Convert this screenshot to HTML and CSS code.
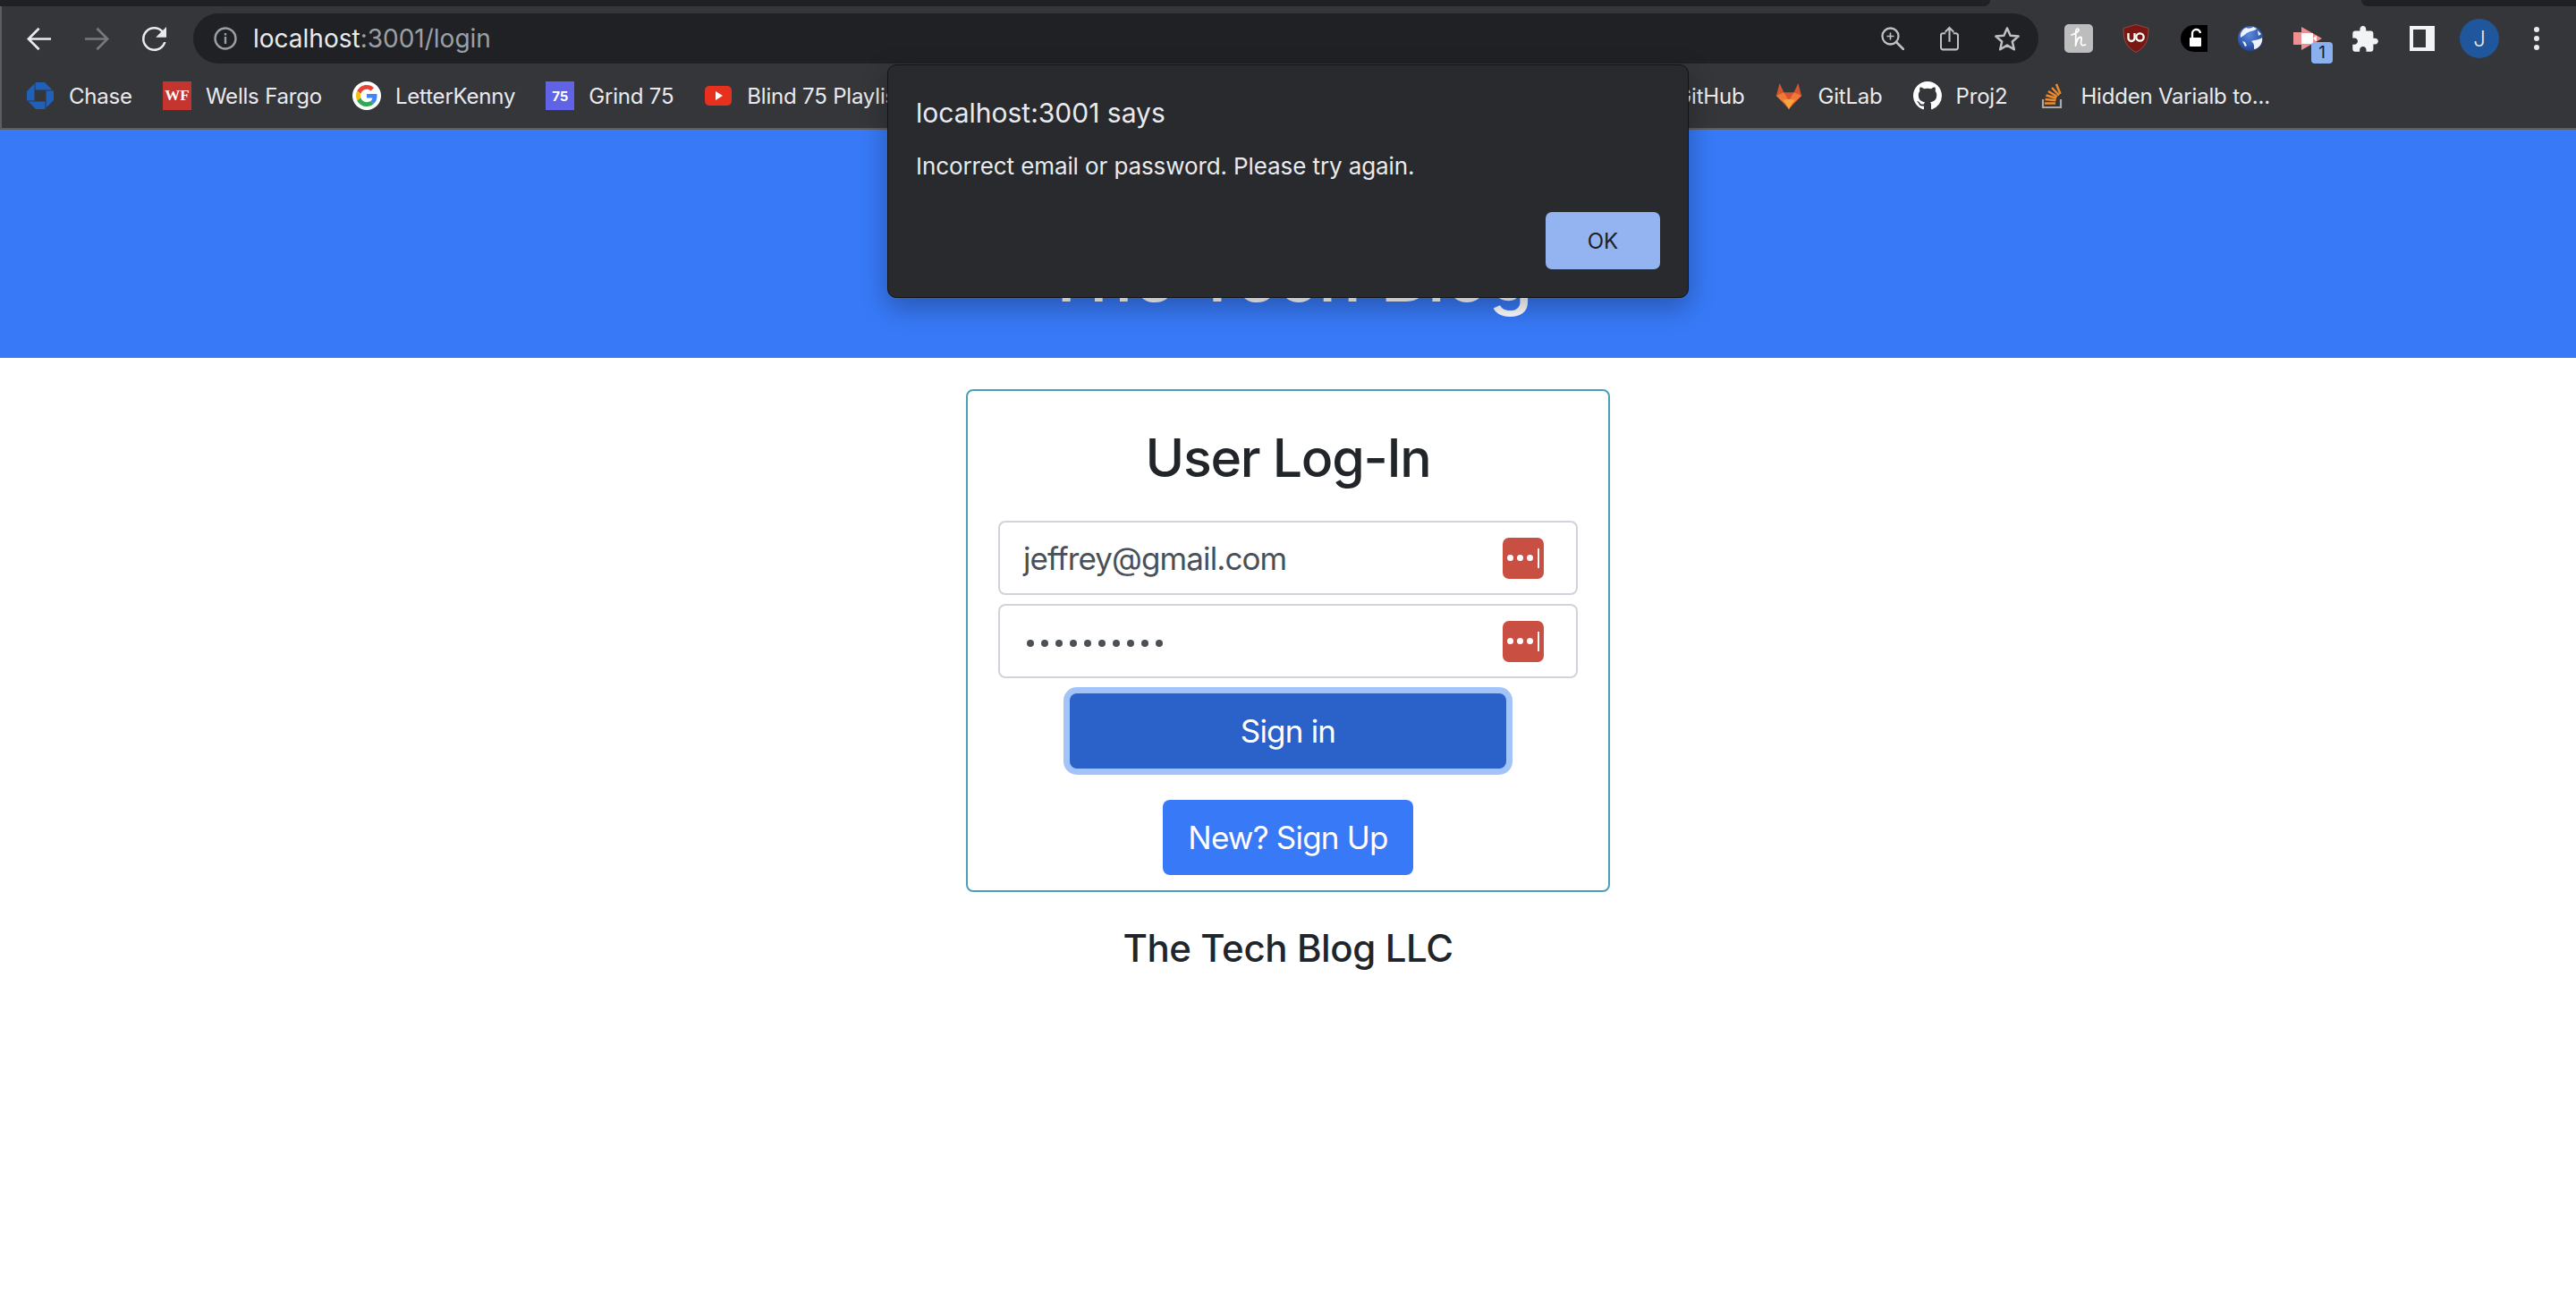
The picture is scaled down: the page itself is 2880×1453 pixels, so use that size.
FILE: index.html
```html
<!DOCTYPE html>
<html lang="en">
<head>
<meta charset="utf-8">
<title>The Tech Blog</title>
<link rel="stylesheet" href="styles.css">
</head>
<body>
<div class="chrome">
  <div class="tabstrip"><div class="tab-dark tab-left"></div><div class="tab-dark tab-right"></div></div>
  <div class="toolbar">
    <svg class="nav nav-back" viewBox="4 4 16 16"><path fill="#e8eaed" d="M20 11.200H7l5.600-5.600L11.500 4.500 4 12l7.500 7.500 1.100-1.100L7 12.800h13z"/></svg>
    <svg class="nav nav-fwd" viewBox="4 4 16 16"><path fill="#77787b" d="M4 11.200h13l-5.600-5.600 1.100-1.100L20 12l-7.500 7.500-1.100-1.100 5.600-5.600H4z"/></svg>
    <svg class="nav nav-reload" viewBox="4 4 16 16"><path fill="#e8eaed" d="M17.650 6.350A7.958 7.958 0 0012 4c-4.420 0-7.990 3.580-7.990 8s3.570 8 7.990 8c3.730 0 6.840-2.550 7.730-6h-1.500A6.500 6.500 0 0112 18.500 6.500 6.500 0 015.500 12 6.500 6.500 0 0112 5.500c1.800 0 3.300.7 4.500 1.900L13 11h7V4z"/></svg>
    <div class="omnibox">
      <svg class="omni-info" viewBox="0 0 26 26"><circle cx="13" cy="13" r="11.500" fill="none" stroke="#9aa0a6" stroke-width="2.400"/><rect x="11.800" y="11" width="2.400" height="8" fill="#9aa0a6"/><rect x="11.800" y="7" width="2.400" height="2.500" fill="#9aa0a6"/></svg>
      <span class="url"><span class="url-host">localhost</span><span class="url-rest">:3001/login</span></span>
      <svg class="omni-zoom" viewBox="0 0 26 26"><circle cx="10.500" cy="10.500" r="9" fill="none" stroke="#bdc1c4" stroke-width="2.300"/><path d="M17 17l8 8" stroke="#bdc1c4" stroke-width="2.600" stroke-linecap="round"/><path d="M6.500 10.500h8M10.500 6.500v8" stroke="#bdc1c4" stroke-width="1.600"/></svg>
      <svg class="omni-share" viewBox="0 0 22 28"><path d="M6.500 8H3.500a2.500 2.500 0 00-2.500 2.500v14A2.500 2.500 0 003.500 27h15a2.500 2.500 0 002.500-2.500v-14A2.500 2.500 0 0018.500 8h-3" fill="none" stroke="#bdc1c4" stroke-width="2.200"/><path d="M11 18V2M6 6.500L11 1.500l5 5" fill="none" stroke="#bdc1c4" stroke-width="2.200"/></svg>
      <svg class="omni-star" viewBox="0 0 30 28"><path d="M15 2.500l3.600 8.300 9 .8-6.800 5.900 2 8.800-7.800-4.700-7.800 4.700 2-8.800-6.800-5.900 9-.8z" fill="none" stroke="#bdc1c4" stroke-width="2.500" stroke-linejoin="round"/></svg>
    </div>
    <div class="extensions">
      <svg class="ext ext-h" viewBox="0 0 32 32"><rect width="32" height="32" rx="5" fill="#bdbdbd"/><path d="M8 12C11 11 16 9 16 6.500 16 4.500 13.500 4.500 13 7 12.500 10 13 18 12.500 24 13.500 18 16 14.500 18 14.500 20 14.500 19 18 18.500 20 18 23 20 24.500 23.500 23" fill="none" stroke="#fff" stroke-width="1.800" stroke-linecap="round" stroke-linejoin="round"/></svg>
      <svg class="ext ext-ub" viewBox="0 0 30 32"><path d="M15 .5L29 4.500C29 17 27 25 15 31.500 3 25 1 17 1 4.500z" fill="#7a1712" stroke="#8d4a46"/><path d="M6.500 10v5.500a3.500 3.500 0 007 0V10" fill="none" stroke="#fff" stroke-width="2.300"/><circle cx="19.500" cy="14.500" r="4.200" fill="none" stroke="#fff" stroke-width="2.300"/></svg>
      <svg class="ext ext-lock" viewBox="0 0 30 30"><path d="M15 0H30V30H15A15 15 0 0115 0z" fill="#000"/><rect x="10" y="14" width="13" height="10" rx="1" fill="#fff"/><path d="M13 14V10a4.500 4.500 0 019-1" fill="none" stroke="#fff" stroke-width="2.400"/></svg>
      <svg class="ext ext-globe" viewBox="0 0 28 28"><defs><radialGradient id="g" cx="45%" cy="35%" r="70%"><stop offset="0" stop-color="#5a8ae0"/><stop offset="1" stop-color="#1f3f8f"/></radialGradient></defs><circle cx="14" cy="14" r="14" fill="url(#g)"/><path d="M9 2C11 3 15 3 17 1L21 3C19 6 15 5 12 7 9 8 7 11 3 13 2 8 5 4 9 2zM15 17C19 15 24 16 27 13 28 19 24 25 18 26 18 23 19 20 15 17zM22 5L26 9 23 11zM5 17l3 1 2 4-2 1z" fill="#eef3fb"/></svg>
      <span class="ext-video">
        <svg class="ext ext-vid" viewBox="0 0 32 26"><path d="M9 0L32 13 9 26z" fill="#ef8f8f"/><rect y="6" width="9" height="14" fill="#ef8f8f"/><rect x="9" y="7" width="13" height="12" fill="#fff"/><path d="M22 13L26 9.500v7z" fill="#fff"/></svg>
        <span class="badge">1</span>
      </span>
      <svg class="ext ext-puzzle" viewBox="1.800 1 21.300 21.200"><path fill="#f1f3f4" d="M20.500 11H19V7c0-1.100-.9-2-2-2h-4V3.500C13 2.120 11.880 1 10.500 1S8 2.120 8 3.500V5H4c-1.100 0-1.990.9-1.990 2v3.800H3.500c1.490 0 2.700 1.210 2.700 2.700s-1.210 2.700-2.700 2.700H2V20c0 1.100.9 2 2 2h3.800v-1.500c0-1.490 1.210-2.700 2.700-2.700 1.490 0 2.700 1.210 2.700 2.700V22H17c1.100 0 2-.9 2-2v-4h1.500c1.380 0 2.500-1.120 2.500-2.500S21.880 11 20.500 11z"/></svg>
      <svg class="ext ext-panel" viewBox="0 0 28 28"><rect width="28" height="28" fill="#f1f3f4"/><rect x="4" y="4" width="14" height="20" fill="#35363a"/></svg>
      <span class="avatar">J</span>
      <svg class="ext ext-menu" viewBox="0 0 8 26"><circle cx="4" cy="3" r="3" fill="#e8eaed"/><circle cx="4" cy="13" r="3" fill="#e8eaed"/><circle cx="4" cy="23" r="3" fill="#e8eaed"/></svg>
    </div>
  </div>
  <div class="bookmarks">
    <span class="bm">
      <svg class="bm-ico" viewBox="0 0 32 32"><g fill="#2160b8"><path d="M10.500 1H21l8.500 8.500h-19z"/><path d="M10.500 1H21l8.500 8.500h-19z" transform="rotate(90 16 16)"/><path d="M10.500 1H21l8.500 8.500h-19z" transform="rotate(180 16 16)"/><path d="M10.500 1H21l8.500 8.500h-19z" transform="rotate(270 16 16)"/></g></svg>
      Chase</span>
    <span class="bm"><span class="bm-ico wf">WF</span>Wells Fargo</span>
    <span class="bm">
      <svg class="bm-ico" viewBox="0 0 32 32"><circle cx="16" cy="16" r="16" fill="#fff"/><g transform="translate(4 4) scale(.5)"><path fill="#EA4335" d="M24 9.500c3.540 0 6.710 1.220 9.210 3.600l6.850-6.850C35.900 2.380 30.470 0 24 0 14.620 0 6.510 5.380 2.560 13.220l7.980 6.190C12.430 13.720 17.740 9.500 24 9.500z"/><path fill="#4285F4" d="M46.980 24.550c0-1.570-.15-3.090-.38-4.550H24v9.020h12.940c-.58 2.960-2.260 5.480-4.780 7.180l7.730 6c4.510-4.180 7.090-10.360 7.090-17.650z"/><path fill="#FBBC05" d="M10.530 28.590c-.48-1.450-.76-2.990-.76-4.590s.27-3.140.76-4.590l-7.980-6.190C.92 16.460 0 20.120 0 24c0 3.880.92 7.540 2.560 10.780l7.970-6.190z"/><path fill="#34A853" d="M24 48c6.480 0 11.930-2.130 15.890-5.810l-7.730-6c-2.150 1.450-4.920 2.300-8.160 2.300-6.260 0-11.570-4.220-13.470-9.910l-7.980 6.190C6.510 42.620 14.620 48 24 48z"/></g></svg>
      LetterKenny</span>
    <span class="bm"><span class="bm-ico grind">75</span>Grind 75</span>
    <span class="bm bm-blind">
      <svg class="bm-ico" viewBox="0 0 32 32"><rect x="1" y="5" width="30" height="22" rx="5" fill="#e8301f"/><path d="M13 11l8 5-8 5z" fill="#fff"/></svg>
      Blind 75 Playlist</span>
    <span class="bm">
      <svg class="bm-ico" viewBox="0 0 16 16"><path fill="#fff" d="M8 0C3.580 0 0 3.580 0 8c0 3.540 2.290 6.530 5.470 7.590.4.070.55-.17.55-.38 0-.19-.01-.82-.01-1.490-2.010.37-2.530-.49-2.690-.94-.09-.23-.48-.94-.82-1.130-.28-.15-.68-.52-.01-.53.63-.01 1.080.58 1.230.82.720 1.210 1.870.87 2.330.66.070-.52.280-.87.510-1.070-1.780-.2-3.640-.89-3.640-3.950 0-.87.310-1.590.82-2.150-.08-.2-.36-1.020.08-2.120 0 0 .67-.21 2.200.82.640-.18 1.320-.27 2-.27s1.360.090 2 .27c1.530-1.040 2.200-.82 2.200-.82.440 1.100.16 1.920.08 2.120.51.56.82 1.270.82 2.150 0 3.070-1.870 3.750-3.650 3.950.29.25.54.73.54 1.480 0 1.070-.01 1.930-.01 2.200 0 .21.15.46.55.38A8.013 8.013 0 0016 8c0-4.420-3.580-8-8-8z"/></svg>
      GitHub</span>
    <span class="bm">
      <svg class="bm-ico" viewBox="0 0 34 32"><path d="M6 1l5 11h12l5-11 4 15-15 16L2 16z" fill="#d6532f"/><path d="M2 16l9-4 6 10-5 3zM32 16l-9-4-6 10 5 3z" fill="#ee7a36"/><path d="M10 21l7-1 7 1-7 11z" fill="#f6a63c"/></svg>
      GitLab</span>
    <span class="bm">
      <svg class="bm-ico" viewBox="0 0 16 16"><path fill="#fff" d="M8 0C3.580 0 0 3.580 0 8c0 3.540 2.290 6.530 5.470 7.590.4.070.55-.17.55-.38 0-.19-.01-.82-.01-1.490-2.010.37-2.530-.49-2.690-.94-.09-.23-.48-.94-.82-1.130-.28-.15-.68-.52-.01-.53.63-.01 1.080.58 1.230.82.720 1.210 1.870.87 2.330.66.070-.52.280-.87.510-1.070-1.780-.2-3.640-.89-3.640-3.950 0-.87.310-1.590.82-2.150-.08-.2-.36-1.020.08-2.120 0 0 .67-.21 2.200.82.640-.18 1.320-.27 2-.27s1.360.090 2 .27c1.530-1.040 2.200-.82 2.200-.82.440 1.100.16 1.920.08 2.120.51.56.82 1.270.82 2.150 0 3.070-1.870 3.750-3.650 3.950.29.25.54.73.54 1.480 0 1.070-.01 1.930-.01 2.200 0 .21.15.46.55.38A8.013 8.013 0 0016 8c0-4.420-3.580-8-8-8z"/></svg>
      Proj2</span>
    <span class="bm">
      <svg class="bm-ico" viewBox="0 0 32 32"><path d="M6 20v9h20v-9" fill="none" stroke="#a7a9ab" stroke-width="2.200"/><path d="M10 24.500h12M10.500 20l12 1.300M11.500 15.500l11.500 3.300M14 11l10 6M18 7l8 8.500M23 3l4.500 11" fill="none" stroke="#ef8a2b" stroke-width="2.500" transform="translate(-2 0)"/></svg>
      Hidden Varialb to...</span>
  </div>
</div>

<header class="banner"><h1 class="banner-title">The Tech Blog</h1></header>

<main class="main">
  <form class="card">
    <h2 class="card-title">User Log-In</h2>
    <div class="field">
      <span class="field-value">jeffrey@gmail.com</span>
      <span class="lastpass"><i></i><i></i><i></i><b></b></span>
    </div>
    <div class="field">
      <span class="field-dots"><i></i><i></i><i></i><i></i><i></i><i></i><i></i><i></i><i></i><i></i></span>
      <span class="lastpass"><i></i><i></i><i></i><b></b></span>
    </div>
    <button class="btn btn-signin" type="button">Sign in</button>
    <button class="btn btn-signup" type="button">New? Sign Up</button>
  </form>
  <p class="footer-text">The Tech Blog LLC</p>
</main>

<div class="dialog">
  <div class="dialog-title">localhost:3001 says</div>
  <div class="dialog-msg">Incorrect email or password. Please try again.</div>
  <div class="dialog-actions"><button class="dialog-ok" type="button">OK</button></div>
</div>
</body>
</html>
```
FILE: styles.css
```css
* { box-sizing: border-box; }
html, body { margin: 0; padding: 0; }
body {
  height: 1453px;
  overflow: hidden;
  background: #fff;
  font-family: Inter, "Liberation Sans", sans-serif;
  color: #212529;
}

/* browser chrome */
.chrome { background: #35363a; height: 145px; border-bottom: 2px solid #5c5d60; display: flex; flex-direction: column; }
.tabstrip { height: 7px; display: flex; justify-content: space-between; }
.tab-dark { background: #202124; height: 7px; }
.tab-left { width: 2225px; border-bottom-right-radius: 7px; }
.tab-right { width: 240px; border-bottom-left-radius: 7px; }

.toolbar { height: 68px; display: flex; align-items: center; padding: 4px 0 0 28px; border-left: 2px solid #5c5d60; }
.nav { display: block; height: 27px; width: 27px; flex: none; }
.nav-fwd { margin-left: 38px; }
.nav-reload { margin-left: 37px; }
.omnibox {
  width: 2063px; height: 56px; margin-left: 30px; flex: none;
  background: #202124; border-radius: 28px;
  display: flex; align-items: center; padding-left: 23px;
}
.omni-info { width: 26px; height: 26px; flex: none; }
.url { margin-left: 18px; font-size: 28px; flex: 1; white-space: nowrap; }
.url-host { color: #e8eaed; }
.url-rest { color: #9aa0a6; }
.omni-zoom { width: 26px; height: 26px; flex: none; }
.omni-share { width: 21px; height: 28px; flex: none; margin-left: 40px; }
.omni-star { width: 30px; height: 28px; flex: none; margin-left: 39px; margin-right: 20px; }

.extensions { display: flex; align-items: center; margin-left: 29px; position: relative; }
.ext { display: block; flex: none; }
.ext-h { width: 32px; height: 32px; }
.ext-ub { width: 30px; height: 32px; margin-left: 33px; }
.ext-lock { width: 30px; height: 30px; margin-left: 35px; }
.ext-globe { width: 28px; height: 28px; margin-left: 34px; }
.ext-video { display: block; position: relative; width: 32px; height: 26px; margin-left: 34px; flex: none; }
.ext-vid { width: 32px; height: 26px; }
.badge {
  position: absolute; left: 20px; top: 17px; width: 24px; height: 24px;
  background: #8ab0f0; border-radius: 4px; color: #202124;
  font-size: 19px; line-height: 24px; text-align: center;
}
.ext-puzzle { width: 29px; height: 29px; margin-left: 34px; }
.ext-panel { width: 28px; height: 28px; margin-left: 35px; }
.avatar {
  width: 44px; height: 44px; margin-left: 28px; flex: none; border-radius: 50%;
  background: #20579c; color: #e8eaed; font-size: 24px; font-weight: 300;
  display: flex; align-items: center; justify-content: center;
}
.ext-menu { width: 8px; height: 26px; margin-left: 38px; }

.bookmarks { height: 68px; display: flex; align-items: center; padding: 0 0 4px 27px; border-left: 2px solid #5c5d60; color: #e8eaed; font-size: 24px; letter-spacing: -0.2px; white-space: nowrap; }
.bm { display: flex; align-items: center; gap: 16px; margin-right: 34px; flex: none; }
.bm-ico { width: 32px; height: 32px; flex: none; display: flex; align-items: center; justify-content: center; }
.bm-blind { width: 1004px; }
.wf { background: #c5352f; color: #fff; font-family: "Liberation Serif", serif; font-weight: 700; font-size: 17px; letter-spacing: 0; }
.grind { background: #6063e6; color: #fff; font-size: 15px; font-weight: 700; letter-spacing: 0; }

/* page */
.banner { height: 255px; background: #3779f7; display: flex; justify-content: center; align-items: flex-start; padding-top: 115px; }
.banner-title { margin: 0; color: #fff; font-weight: 500; font-size: 80px; line-height: 1.2; }
.main { display: flex; flex-direction: column; align-items: center; padding-top: 35px; }
.card {
  width: 720px; height: 562px; border: 2px solid #4aa0b8; border-radius: 8px;
  padding: 0 34px; display: flex; flex-direction: column; align-items: center;
}
.card-title { margin: 39px 0 0; font-size: 59px; line-height: 72px; font-weight: 500; letter-spacing: -1.3px; }
.field {
  width: 100%; height: 83px; margin-top: 34px; border: 2px solid #ced4da; border-radius: 8px;
  display: flex; align-items: center; justify-content: space-between; padding: 0 36px 0 26px;
  background: #fff;
}
.field + .field { margin-top: 10px; }
.field-value { font-size: 35px; color: #495057; letter-spacing: -0.9px; }
.field-dots { display: flex; gap: 8px; padding-left: 4px; padding-top: 4px; }
.field-dots i { width: 8px; height: 8px; border-radius: 50%; background: #495057; display: block; }
.lastpass {
  width: 46px; height: 46px; background: #c84f41; border-radius: 7px;
  display: flex; align-items: center; gap: 4px; padding-left: 5px;
}
.lastpass i { width: 7px; height: 7px; border-radius: 50%; background: #fff; display: block; }
.lastpass b { width: 2px; height: 22px; background: #fff; display: block; margin-left: 1px; }
.btn { font-family: inherit; color: #fff; font-size: 35px; border: 0; border-radius: 8px; display: block; letter-spacing: -0.8px; padding: 0; }
.btn-signin { width: 488px; height: 84px; margin-top: 17px; background: #2b62c9; box-shadow: 0 0 0 7px #a3c4f9; }
.btn-signup { width: 280px; height: 84px; margin-top: 35px; background: #3779f7; }
.footer-text { margin: 38px 0 0; font-size: 42px; line-height: 50px; font-weight: 500; letter-spacing: -0.4px; }

/* alert dialog */
.dialog {
  position: absolute; left: 992px; top: 72px; width: 896px; height: 261px;
  background: #292a2d; border: 1px solid #121315; border-radius: 10px;
  box-shadow: 0 10px 30px rgba(0,0,0,.3);
  padding: 35px 31px 0 31px;
  color: #e8eaed;
}
.dialog-title { font-size: 30px; line-height: 36px; }
.dialog-msg { font-size: 26px; line-height: 32px; margin-top: 26px; letter-spacing: -0.1px; }
.dialog-actions { display: flex; justify-content: flex-end; margin-top: 35px; }
.dialog-ok { width: 128px; height: 64px; background: #93b3f1; border: 0; border-radius: 7px; font-family: inherit; font-size: 24px; color: #202124; padding: 0; }
```
